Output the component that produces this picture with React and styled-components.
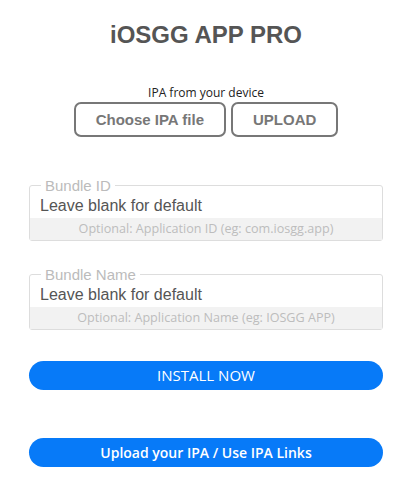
import React from 'react'
import styled, { createGlobalStyle } from 'styled-components'

const GlobalStyle = createGlobalStyle`
  body {
    margin: 0;
    background: #fff;
    font-family: 'Liberation Sans', Arial, sans-serif;
  }
`

const Page = styled.div`
  width: 410px;
  box-sizing: border-box;
  padding: 0 27px 0 29px;
  display: flex;
  flex-direction: column;
`

const Title = styled.h1`
  margin: 21px 0 0;
  font-size: 24px;
  line-height: 28px;
  font-weight: bold;
  color: #555;
  text-align: center;
`

const PickLabel = styled.div`
  margin-top: 36px;
  font-family: 'Open Sans', sans-serif;
  font-size: 12px;
  line-height: 16px;
  color: #222;
  text-align: center;
`

const PickRow = styled.div`
  margin-top: 1px;
  display: flex;
  justify-content: center;
  gap: 5px;
`

const OutlineButton = styled.button`
  box-sizing: border-box;
  height: 35px;
  padding: 0 20px;
  border: 2px solid #777;
  border-radius: 7px;
  background: #fff;
  font-family: 'Liberation Sans', Arial, sans-serif;
  font-size: 15px;
  font-weight: bold;
  color: #777;
`

const Field = styled.fieldset`
  margin: ${(p) => p.$top}px 0 0;
  padding: 0;
  border: 1px solid #ddd;
  border-radius: 3px;
  min-width: 0;
`

const Legend = styled.legend`
  margin-left: 11px;
  padding: 0 4px;
  font-size: 15px;
  line-height: 17px;
  color: #bbb;
`

const TextInput = styled.input`
  display: block;
  width: 100%;
  box-sizing: border-box;
  height: 24px;
  padding: 0 10px;
  border: none;
  outline: none;
  background: transparent;
  font-family: 'Liberation Sans', Arial, sans-serif;
  font-size: 16px;
  color: #555;
  &::placeholder {
    color: #555;
  }
`

const Hint = styled.div`
  height: 22px;
  line-height: 22px;
  background: #f2f2f2;
  font-family: 'Open Sans', sans-serif;
  font-size: 12.6px;
  color: #bdbdbd;
  text-align: center;
`

const BlueButton = styled.button`
  margin-top: ${(p) => p.$top}px;
  height: 29px;
  width: 100%;
  border: none;
  border-radius: 15px;
  background: #077af8;
  color: #fff;
  font-family: 'Open Sans', sans-serif;
  font-size: ${(p) => (p.$bold ? 14 : 15)}px;
  font-weight: ${(p) => (p.$bold ? 600 : 400)};
  line-height: 29px;
  padding: 0;
`

export default function App() {
  return (
    <>
      <GlobalStyle />
      <Page>
        <Title>iOSGG APP PRO</Title>
        <PickLabel>IPA from your device</PickLabel>
        <PickRow>
          <OutlineButton>Choose IPA file</OutlineButton>
          <OutlineButton>UPLOAD</OutlineButton>
        </PickRow>
        <Field $top={40}>
          <Legend>Bundle ID</Legend>
          <TextInput placeholder='Leave blank for default' />
          <Hint>Optional: Application ID (eg: com.iosgg.app)</Hint>
        </Field>
        <Field $top={25}>
          <Legend>Bundle Name</Legend>
          <TextInput placeholder='Leave blank for default' />
          <Hint>Optional: Application Name (eg: IOSGG APP)</Hint>
        </Field>
        <BlueButton $top={31}>INSTALL NOW</BlueButton>
        <BlueButton $top={48} $bold>
          Upload your IPA / Use IPA Links
        </BlueButton>
      </Page>
    </>
  )
}
